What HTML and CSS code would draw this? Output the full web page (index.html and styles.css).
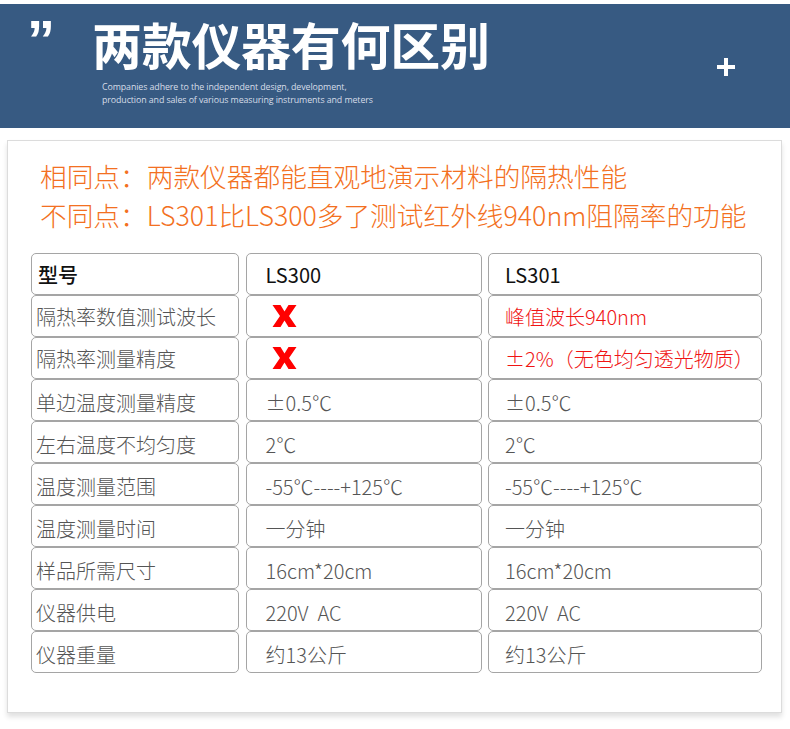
FILE: index.html
```html
<!DOCTYPE html>
<html lang="zh">
<head>
<meta charset="utf-8">
<title>两款仪器有何区别</title>
<link rel="stylesheet" href="styles.css">
</head>
<body>
<header class="banner">
  <div class="quote">”</div>
  <div class="title-block">
    <h1 class="title">两款仪器有何区别</h1>
    <p class="subtitle">Companies adhere to the independent design, development,<br>production and sales of various measuring instruments and meters</p>
  </div>
  <div class="plus"><span class="plus-h"></span><span class="plus-v"></span></div>
</header>

<section class="card">
  <div class="summary">
    <p>相同点：两款仪器都能直观地演示材料的隔热性能</p>
    <p>不同点：LS301比LS300多了测试红外线940nm阻隔率的功能</p>
  </div>

  <div class="table">
    <div class="cell c1 head">型号</div>
    <div class="cell c2 head-val">LS300</div>
    <div class="cell c3 head-val">LS301</div>

    <div class="cell c1">隔热率数值测试波长</div>
    <div class="cell c2"><svg class="cross" viewBox="0 0 24 22" width="25" height="22"><polygon points="0,0 8,0 12,6.5 16,0 24,0 16.5,11 24,22 16,22 12,15.5 8,22 0,22 7.5,11" fill="#ff0000"/></svg></div>
    <div class="cell c3 red">峰值波长940nm</div>

    <div class="cell c1">隔热率测量精度</div>
    <div class="cell c2"><svg class="cross" viewBox="0 0 24 22" width="25" height="22"><polygon points="0,0 8,0 12,6.5 16,0 24,0 16.5,11 24,22 16,22 12,15.5 8,22 0,22 7.5,11" fill="#ff0000"/></svg></div>
    <div class="cell c3 red">±2%（无色均匀透光物质）</div>

    <div class="cell c1 low">单边温度测量精度</div>
    <div class="cell c2 low">±0.5℃</div>
    <div class="cell c3 low">±0.5℃</div>

    <div class="cell c1 low">左右温度不均匀度</div>
    <div class="cell c2 low">2℃</div>
    <div class="cell c3 low">2℃</div>

    <div class="cell c1 low">温度测量范围</div>
    <div class="cell c2 low">-55℃----+125℃</div>
    <div class="cell c3 low">-55℃----+125℃</div>

    <div class="cell c1 low">温度测量时间</div>
    <div class="cell c2 low">一分钟</div>
    <div class="cell c3 low">一分钟</div>

    <div class="cell c1 low">样品所需尺寸</div>
    <div class="cell c2 low">16cm*20cm</div>
    <div class="cell c3 low">16cm*20cm</div>

    <div class="cell c1 low">仪器供电</div>
    <div class="cell c2 low">220V&nbsp; AC</div>
    <div class="cell c3 low">220V&nbsp; AC</div>

    <div class="cell c1 low">仪器重量</div>
    <div class="cell c2 low">约13公斤</div>
    <div class="cell c3 low">约13公斤</div>
  </div>
</section>
</body>
</html>
```

FILE: styles.css
```css
* { box-sizing: border-box; }

html, body {
  margin: 0;
  padding: 0;
  background: #ffffff;
}

body {
  font-family: "Noto Sans CJK SC", "Noto Sans", sans-serif;
  width: 790px;
  overflow: hidden;
}

.banner {
  margin-top: 4px;
  height: 124px;
  background: #375a82;
  display: flex;
  align-items: flex-start;
  color: #ffffff;
  padding-left: 27px;
}

.quote {
  font-family: "Liberation Sans", Arial, sans-serif;
  font-weight: 700;
  font-size: 56px;
  line-height: 56px;
  margin-top: 8px;
  width: 65px;
}

.title-block {
  display: flex;
  flex-direction: column;
}

.title {
  margin: 0;
  margin-top: 9px;
  font-size: 50px;
  line-height: 60px;
  font-weight: 700;
  letter-spacing: -0.3px;
  color: #ffffff;
}

.subtitle {
  margin: 8px 0 0 10px;
  font-family: "Open Sans", sans-serif;
  font-size: 8.85px;
  line-height: 13px;
  color: #d6dde8;
  letter-spacing: -0.1px;
}

.plus {
  margin-left: auto;
  margin-right: 55px;
  margin-top: 54px;
  width: 18px;
  height: 18px;
  position: relative;
}

.plus-h, .plus-v {
  position: absolute;
  background: #ffffff;
}

.plus-h { left: 0; top: 7px; width: 18px; height: 4px; }
.plus-v { left: 7px; top: 0; width: 4px; height: 18px; }

.card {
  margin: 12px 8px 16px 7px;
  border: 1px solid #dcdcdc;
  box-shadow: 0 4px 5px rgba(0, 0, 0, 0.12);
  padding: 15px 20px 38px 23px;
  height: 573px;
}

.summary {
  padding-left: 9px;
  margin-bottom: 19px;
}

.summary p {
  margin: 0;
  font-size: 26.7px;
  line-height: 39px;
  font-weight: 300;
  color: #f37021;
  white-space: nowrap;
}

.table {
  display: grid;
  grid-template-columns: 208px 236px 274px;
  column-gap: 6.5px;
  grid-auto-rows: 42px;
}

.cell {
  border: 1px solid #a5a5a5;
  border-radius: 5px;
  display: flex;
  align-items: center;
  font-size: 20px;
  font-weight: 300;
  color: #555555;
  white-space: nowrap;
}

.cell.low { padding-top: 4px; }

.c1 { padding-left: 4px; }
.c2 { padding-left: 19px; }
.c3 { padding-left: 16px; }

.head {
  color: #111111;
  font-weight: 500;
  padding-left: 6px;
}

.head-val {
  color: #111111;
  font-weight: 400;
}

.red { color: #f01414; }

.cross { margin-left: 6px; display: block; }
```
